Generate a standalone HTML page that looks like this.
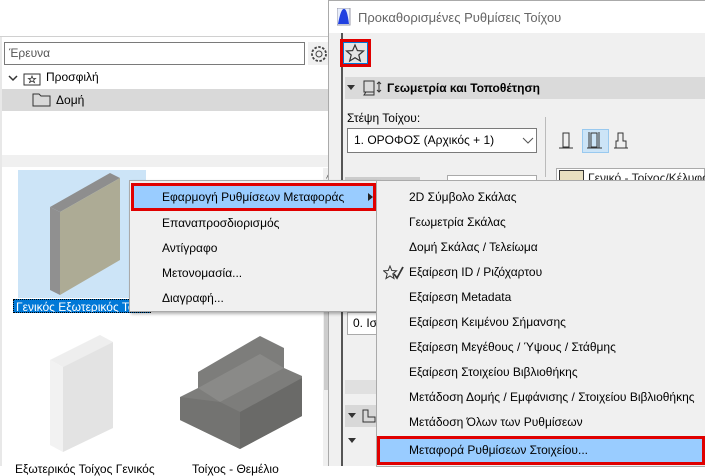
<!DOCTYPE html>
<html><head><meta charset="utf-8"><style>
*{margin:0;padding:0;box-sizing:border-box}
body{width:705px;height:466px;overflow:hidden;background:#fff;font-family:"Liberation Sans","DejaVu Sans",sans-serif;font-size:12px;color:#000;position:relative}
.a{position:absolute}
.mi{position:absolute;left:0;right:0;height:25px;line-height:25px;white-space:nowrap}
</style></head><body>
<div class="a" style="left:0;top:36px;width:342px;height:1px;background:#d0d0d0"></div>
<div class="a" style="left:0;top:37px;width:2px;height:429px;background:#e8e8e8"></div>
<div class="a" style="left:4px;top:42px;width:301px;height:23px;border:1px solid #7a7a7a;background:#fff;padding-left:4px;line-height:21px;color:#555">Έρευνα</div>
<svg class="a" style="left:308px;top:42px" width="28" height="24"><rect x="0" y="0" width="26" height="23" fill="#f0f0f0"/><circle cx="11" cy="12" r="7" fill="none" stroke="#444" stroke-width="1.8" stroke-dasharray="2.5 1.5"/><circle cx="11" cy="12" r="3" fill="none" stroke="#444"/><path d="M21 9 L25 12 L21 15Z" fill="#444"/></svg>
<svg class="a" style="left:8px;top:72px" width="40" height="14"><path d="M1 4 L5 8 L9 4" fill="none" stroke="#333" stroke-width="1.5"/><rect x="16" y="2" width="16" height="11" fill="none" stroke="#333"/><path d="M24 4 l1 2.5 2.5 0 -2 1.5 1 2.5 -2.5-1.5 -2.5 1.5 1-2.5 -2-1.5 2.5 0z" fill="none" stroke="#333" stroke-width=".8"/></svg>
<div class="a" style="left:46px;top:70px;font-size:12px">Προσφιλή</div>
<div class="a" style="left:2px;top:89px;width:338px;height:22px;background:#d9d9d9"></div>
<svg class="a" style="left:32px;top:92px" width="20" height="16"><path d="M1 2 H7 L9 4 H18 V14 H1Z" fill="none" stroke="#333"/></svg>
<div class="a" style="left:56px;top:93px">Δομή</div>
<div class="a" style="left:2px;top:155px;width:338px;height:12px;background:#f0f0f0"></div>
<div class="a" style="left:323px;top:168px;width:17px;height:298px;background:#f0f0f0"></div>
<div class="a" style="left:326px;top:174px;font-size:10px;color:#555">^</div>
<div class="a" style="left:324px;top:300px;width:14px;height:90px;background:#cdcdcd"></div>
<div class="a" style="left:18px;top:170px;width:128px;height:128px;background:#cce4f7"></div>
<svg class="a" style="left:18px;top:170px" width="128" height="128"><path d="M32 37 L92 3 L102 8 L42 42Z" fill="#8e8e8e"/><path d="M32 37 L42 42 L42 125 L32 120Z" fill="#909090"/><path d="M42 42 L102 8 L102 90 L42 125Z" fill="#adab95"/></svg>
<div class="a" style="left:13px;top:299px;width:138px;height:14px;background:#0078d7;color:#fff;line-height:14px;padding-left:2px;border:1px dotted #000;white-space:nowrap;overflow:hidden">Γενικός Εξωτερικός Τοίχος</div>
<svg class="a" style="left:40px;top:330px" width="80" height="125"><path d="M10 30 L60 5 L73 12 L23 37Z" fill="#eee"/><path d="M10 30 L23 37 L23 122 L10 115Z" fill="#f2f2f2"/><path d="M23 37 L73 12 L73 98 L23 122Z" fill="#e3e3e3"/></svg>
<svg class="a" style="left:180px;top:336px" width="125" height="115"><path d="M0 61 L18 52 L18 36 L80 0 L104 12 L104 32 L122 40 L122 80 L60 113 L0 84Z" fill="#7d7d7b"/><path d="M18 52 L80 18 L104 32 L40 66Z" fill="#8a8a88"/><path d="M0 61 L40 66 L60 76 L60 113 L0 84Z" fill="#737371"/><path d="M60 76 L122 42 L122 80 L60 113Z" fill="#6a6a68"/></svg>
<div class="a" style="left:15px;top:462px;color:#000">Εξωτερικός Τοίχος Γενικός</div>
<div class="a" style="left:192px;top:462px;color:#000">Τοίχος - Θεμέλιο</div>
<div class="a" style="left:328px;top:0;width:377px;height:466px;background:#f0f0f0;border-left:1px solid #aaa"></div>
<div class="a" style="left:329px;top:0;width:376px;height:33px;background:#fff;border-top:1px solid #aaa"></div>
<svg class="a" style="left:337px;top:8px" width="14" height="18"><rect x="0" y="0" width="13" height="17" fill="#e8eefc" stroke="#99a"/><path d="M1 16 Q4 0 7 1 Q10 0 12 16Z" fill="#2040e0"/></svg>
<div class="a" style="left:358px;top:10px;font-size:13px;color:#666">Προκαθορισμένες Ρυθμίσεις Τοίχου</div>
<div class="a" style="left:341px;top:33px;width:2px;height:433px;background:#555"></div>
<div class="a" style="left:340px;top:39px;width:31px;height:28px;border:3px solid #e00000"></div>
<div class="a" style="left:343px;top:42px;width:25px;height:22px;border:1px solid #0078d7;background:#e5e5e5"></div>
<svg class="a" style="left:345px;top:43px" width="20" height="20"><path d="M10 2 L12.4 7.6 L18.5 8 L13.8 12 L15.3 18 L10 14.7 L4.7 18 L6.2 12 L1.5 8 L7.6 7.6Z" fill="none" stroke="#333" stroke-width="1.2"/></svg>
<div class="a" style="left:345px;top:77px;width:360px;height:22px;background:#dadada"></div>
<div class="a" style="left:347px;top:85px;border:4px solid transparent;border-top:5px solid #333"></div>
<svg class="a" style="left:362px;top:79px" width="22" height="18"><rect x="2" y="2" width="10" height="11" fill="none" stroke="#333"/><path d="M4 13 L2 16 H12 L12 13" fill="none" stroke="#333"/><path d="M17 3 V13 M15 5 L17 3 L19 5 M15 11 L17 13 L19 11" fill="none" stroke="#333"/></svg>
<div class="a" style="left:387px;top:81px;font-weight:bold">Γεωμετρία και Τοποθέτηση</div>
<div class="a" style="left:347px;top:111px">Στέψη Τοίχου:</div>
<div class="a" style="left:347px;top:128px;width:190px;height:25px;border:1px solid #7a7a7a;background:#fff;line-height:23px;padding-left:6px">1. ΟΡΟΦΟΣ (Αρχικός + 1)</div>
<svg class="a" style="left:522px;top:137px" width="12" height="8"><path d="M1 1 L6 6 L11 1" fill="none" stroke="#555"/></svg>
<div class="a" style="left:545px;top:117px;width:1px;height:60px;background:#bbb"></div>
<div class="a" style="left:582px;top:129px;width:27px;height:24px;background:#cce4f7;border:1px solid #99c9ef"></div>
<svg class="a" style="left:558px;top:131px" width="75" height="20"><g fill="none" stroke="#333"><rect x="5" y="2" width="6" height="14"/><path d="M1 17 H15"/><rect x="33" y="2" width="6" height="14"/><path d="M31 1 V17 M41 1 V17 M29 17 H44"/><path d="M60 2 H65 V10 H68 V17 H58 V10 H60Z"/><path d="M56 17 H70"/></g></svg>
<div class="a" style="left:556px;top:168px;width:149px;height:22px;border:1px solid #aaa;background:#fff"></div>
<div class="a" style="left:559px;top:170px;width:25px;height:18px;background:#e8dfc0;border:1px solid #333"></div>
<div class="a" style="left:588px;top:171px;white-space:nowrap;color:#222">Γενικό - Τοίχος/Κέλυφος</div>
<div class="a" style="left:345px;top:177px;width:75px;height:5px;background:#ccc"></div>
<div class="a" style="left:447px;top:175px;width:90px;height:8px;border:1px solid #aaa;background:#fff"></div>
<div class="a" style="left:347px;top:312px;width:33px;height:23px;border:1px solid #aaa;background:#fff;line-height:21px;padding-left:5px">0. Ισ</div>
<div class="a" style="left:345px;top:380px;width:35px;height:14px;background:#e0e0e0"></div>
<div class="a" style="left:345px;top:405px;width:35px;height:22px;background:#d8d8d8"></div>
<div class="a" style="left:348px;top:413px;border:4px solid transparent;border-top:5px solid #333"></div>
<svg class="a" style="left:361px;top:408px" width="16" height="16"><path d="M2 2 V14 H14 V9 H7 V2Z" fill="none" stroke="#333"/></svg>
<div class="a" style="left:348px;top:438px;border:4px solid transparent;border-top:5px solid #333"></div>
<div class="a" style="left:129px;top:180px;width:249px;height:132px;background:#f0f0f0;border:1px solid #aaa;box-shadow:2px 2px 3px rgba(0,0,0,.3)">
<div class="a" style="left:1px;top:2px;width:245px;height:28px;background:#99ccff;border:3px solid #e00000"></div>
<div class="mi" style="top:4px;left:32px">Εφαρμογή Ρυθμίσεων Μεταφοράς</div>
<div class="a" style="left:238px;top:12px;border:4px solid transparent;border-left:5px solid #222"></div>
<div class="mi" style="top:30px;left:32px">Επαναπροσδιορισμός</div>
<div class="mi" style="top:55px;left:32px">Αντίγραφο</div>
<div class="mi" style="top:80px;left:32px">Μετονομασία...</div>
<div class="mi" style="top:105px;left:32px">Διαγραφή...</div>
</div>
<div class="a" style="left:376px;top:180px;width:330px;height:287px;background:#f0f0f0;border:1px solid #aaa">
<div class="mi" style="top:4px;left:32px">2D Σύμβολο Σκάλας</div>
<div class="mi" style="top:29px;left:32px">Γεωμετρία Σκάλας</div>
<div class="mi" style="top:54px;left:32px">Δομή Σκάλας / Τελείωμα</div>
<svg class="a" style="left:6px;top:84px" width="22" height="16"><path d="M7 1 L8.8 5.5 L13.5 5.8 L9.8 8.8 L11 13.5 L7 11 L3 13.5 L4.2 8.8 L0.5 5.8 L5.2 5.5Z" fill="none" stroke="#333"/><path d="M11 9 L14 13 L20 2" fill="none" stroke="#333" stroke-width="1.8"/></svg>
<div class="mi" style="top:79px;left:32px">Εξαίρεση ID / Ριζόχαρτου</div>
<div class="mi" style="top:104px;left:32px">Εξαίρεση Metadata</div>
<div class="mi" style="top:129px;left:32px">Εξαίρεση Κειμένου Σήμανσης</div>
<div class="mi" style="top:154px;left:32px">Εξαίρεση Μεγέθους / Ύψους / Στάθμης</div>
<div class="mi" style="top:179px;left:32px">Εξαίρεση Στοιχείου Βιβλιοθήκης</div>
<div class="mi" style="top:204px;left:32px">Μετάδοση Δομής / Εμφάνισης / Στοιχείου Βιβλιοθήκης</div>
<div class="mi" style="top:229px;left:32px">Μετάδοση Όλων των  Ρυθμίσεων</div>
<div class="a" style="left:0;top:255px;width:328px;height:29px;background:#99ccff;border:3px solid #e00000"></div>
<div class="mi" style="top:257px;left:32px">Μεταφορά Ρυθμίσεων Στοιχείου...</div>
</div>
</body></html>
